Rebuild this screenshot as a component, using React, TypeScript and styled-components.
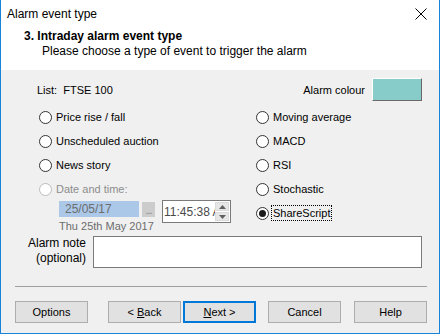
import React from 'react';
import styled, { createGlobalStyle } from 'styled-components';

const GlobalStyle = createGlobalStyle`
  html, body {
    margin: 0;
    padding: 0;
    background: #ffffff;
  }
  body {
    font-family: 'Liberation Sans', Arial, sans-serif;
  }
`;

const leftOptions = ['Price rise / fall', 'Unscheduled auction', 'News story'];
const rightOptions = ['Moving average', 'MACD', 'RSI', 'Stochastic', 'ShareScript'];

const Radio = ({
  label,
  checked,
  disabled,
  focused,
}: {
  label: string;
  checked?: boolean;
  disabled?: boolean;
  focused?: boolean;
}) => (
  <RadioRow disabled={disabled}>
    <Circle disabled={disabled}>{checked && <Dot />}</Circle>
    <RadioLabel focused={focused}>{label}</RadioLabel>
  </RadioRow>
);

export default () => {
  return (
    <>
      <GlobalStyle />
      <Window>
        <TitleBar>
          <TitleText>Alarm event type</TitleText>
          <CloseButton>
            <svg width="12" height="12" viewBox="0 0 12 12">
              <path d="M0.5 0.5 L11.5 11.5 M11.5 0.5 L0.5 11.5" stroke="#000" strokeWidth="1" />
            </svg>
          </CloseButton>
        </TitleBar>
        <Header>
          <Heading>3. Intraday alarm event type</Heading>
          <SubHeading>Please choose a type of event to trigger the alarm</SubHeading>
        </Header>
        <Body>
          <TopRow>
            <ListText>List:&nbsp; FTSE 100</ListText>
            <ColourPicker>
              <span>Alarm colour</span>
              <Swatch />
            </ColourPicker>
          </TopRow>

          <Options>
            <Column>
              {leftOptions.map((o) => (
                <Radio key={o} label={o} />
              ))}
              <Radio label="Date and time:" disabled />
              <DateRow>
                <DateColumn>
                  <DateField>25/05/17</DateField>
                  <DateCaption>Thu 25th May 2017</DateCaption>
                </DateColumn>
                <EllipsisButton>...</EllipsisButton>
                <TimeField>
                  <TimeText>11:45:38 AM</TimeText>
                  <Spinner>
                    <SpinHalf>
                      <svg width="7" height="4" viewBox="0 0 7 4">
                        <path d="M0 4 L3.5 0 L7 4 Z" fill="#606060" />
                      </svg>
                    </SpinHalf>
                    <SpinHalf>
                      <svg width="7" height="4" viewBox="0 0 7 4">
                        <path d="M0 0 L3.5 4 L7 0 Z" fill="#606060" />
                      </svg>
                    </SpinHalf>
                  </Spinner>
                </TimeField>
              </DateRow>
            </Column>
            <Column>
              {rightOptions.map((o) => (
                <Radio
                  key={o}
                  label={o}
                  checked={o === 'ShareScript'}
                  focused={o === 'ShareScript'}
                />
              ))}
            </Column>
          </Options>

          <NoteRow>
            <NoteLabel>
              Alarm note
              <br />
              (optional)
            </NoteLabel>
            <NoteBox />
          </NoteRow>

          <Separator />

          <ButtonRow>
            <Button>
              <span>Options</span>
            </Button>
            <Button space={20}>
              <span>
                &lt; <u>B</u>ack
              </span>
            </Button>
            <Button space={2} primary>
              <span>
                <u>N</u>ext &gt;
              </span>
            </Button>
            <Button space={12}>
              <span>Cancel</span>
            </Button>
            <Button space={13}>
              <span>Help</span>
            </Button>
          </ButtonRow>
        </Body>
      </Window>
    </>
  );
};

const Window = styled.div`
  width: 440px;
  height: 334px;
  box-sizing: border-box;
  border: 1px solid #1883d7;
  border-top: none;
  display: flex;
  flex-direction: column;
  background: #ffffff;
`;

const TitleBar = styled.div`
  height: 27px;
  display: flex;
  align-items: center;
  justify-content: space-between;
  padding: 0 12px 0 6px;
`;

const TitleText = styled.div`
  font-size: 12px;
  color: #000;
  padding-top: 1px;
`;

const CloseButton = styled.div`
  width: 12px;
  height: 12px;
  display: flex;
`;

const Header = styled.div`
  height: 43px;
  box-sizing: border-box;
  padding: 2px 0 0 23px;
`;

const Heading = styled.div`
  font-size: 12px;
  font-weight: bold;
  line-height: 15px;
  color: #000;
`;

const SubHeading = styled.div`
  font-size: 12px;
  line-height: 15px;
  padding-left: 18px;
  color: #000;
`;

const Body = styled.div`
  flex: 1;
  background: #f0f0f0;
  display: flex;
  flex-direction: column;
  padding: 8px 17px 0 14px;
  font-size: 11px;
  color: #000;
`;

const TopRow = styled.div`
  height: 23px;
  display: flex;
  align-items: center;
  justify-content: space-between;
  padding-left: 22px;
`;

const ListText = styled.div`
  padding-top: 1px;
`;

const ColourPicker = styled.div`
  display: flex;
  align-items: center;
  gap: 7px;
`;

const Swatch = styled.div`
  width: 50px;
  height: 23px;
  box-sizing: border-box;
  background: #88ccc9;
  border: 1px solid;
  border-color: #ffffff #696969 #696969 #ffffff;
`;

const Options = styled.div`
  display: grid;
  grid-template-columns: 217px 1fr;
  margin-top: 4px;
  padding-left: 24px;
`;

const Column = styled.div`
  display: flex;
  flex-direction: column;
`;

const RadioRow = styled.div<{ disabled?: boolean }>`
  height: 24px;
  display: flex;
  align-items: center;
  gap: 3px;
  color: ${(p) => (p.disabled ? '#8d8d8d' : '#000')};
`;

const Circle = styled.div<{ disabled?: boolean }>`
  width: 13px;
  height: 13px;
  box-sizing: border-box;
  border-radius: 50%;
  border: 1px solid ${(p) => (p.disabled ? '#bcbcbc' : '#333333')};
  background: #ffffff;
  display: flex;
  align-items: center;
  justify-content: center;
`;

const Dot = styled.div`
  width: 7px;
  height: 7px;
  border-radius: 50%;
  background: #1a1a1a;
`;

const RadioLabel = styled.span<{ focused?: boolean }>`
  padding: 0 1px;
  line-height: 14px;
  border: 1px dotted ${(p) => (p.focused ? '#000' : 'transparent')};
  margin-left: -1px;
`;

const DateRow = styled.div`
  display: flex;
  align-items: flex-start;
  padding-left: 20px;
`;

const DateColumn = styled.div`
  width: 80px;
  display: flex;
  flex-direction: column;
`;

const DateField = styled.div`
  width: 80px;
  height: 16px;
  box-sizing: border-box;
  background: #abc8e9;
  color: #6d6d6d;
  font-size: 12px;
  line-height: 16px;
  padding-left: 6px;
`;

const DateCaption = styled.div`
  margin-top: 3px;
  font-size: 11px;
  line-height: 13px;
  white-space: nowrap;
  color: #6d6d6d;
`;

const EllipsisButton = styled.div`
  width: 13px;
  height: 15px;
  margin: 1px 0 0 3px;
  background: #cccccc;
  color: #8a8a8a;
  font-size: 11px;
  line-height: 17px;
  text-align: center;
  letter-spacing: -1px;
`;

const TimeField = styled.div`
  width: 69px;
  height: 23px;
  margin-left: 7px;
  margin-top: -1px;
  box-sizing: border-box;
  border: 1px solid #7a7a7a;
  background: #ffffff;
  display: flex;
  align-items: center;
  overflow: hidden;
`;

const TimeText = styled.div`
  flex: 1;
  overflow: hidden;
  white-space: nowrap;
  font-size: 12px;
  color: #4a4a4a;
  padding-left: 1px;
`;

const Spinner = styled.div`
  width: 14px;
  height: 19px;
  margin-right: 1px;
  display: flex;
  flex-direction: column;
  gap: 1px;
`;

const SpinHalf = styled.div`
  flex: 1;
  background: #e6e6e6;
  border: 1px solid #dadada;
  display: flex;
  align-items: center;
  justify-content: center;
`;

const NoteRow = styled.div`
  display: flex;
  align-items: flex-start;
  margin-top: 3px;
`;

const NoteLabel = styled.div`
  width: 71px;
  text-align: right;
  font-size: 12px;
  line-height: 15px;
  padding-top: 0px;
`;

const NoteBox = styled.div`
  flex: 1;
  height: 32px;
  margin-left: 7px;
  box-sizing: border-box;
  border: 1px solid #7a7a7a;
  background: #ffffff;
`;

const Separator = styled.div`
  height: 1px;
  background: #a0a0a0;
  margin-top: 18px;
  margin-right: -5px;
`;

const ButtonRow = styled.div`
  display: flex;
  margin-top: 14px;
  margin-right: -5px;
`;

const Button = styled.div<{ primary?: boolean; space?: number }>`
  width: 73px;
  height: 22px;
  margin-left: ${(p) => p.space ?? 0}px;
  box-sizing: border-box;
  background: #e1e1e1;
  border: ${(p) => (p.primary ? '2px solid #0078d7' : '1px solid #adadad')};
  display: flex;
  align-items: center;
  justify-content: center;
  font-size: 11px;
  color: #000;
  white-space: pre;
`;
